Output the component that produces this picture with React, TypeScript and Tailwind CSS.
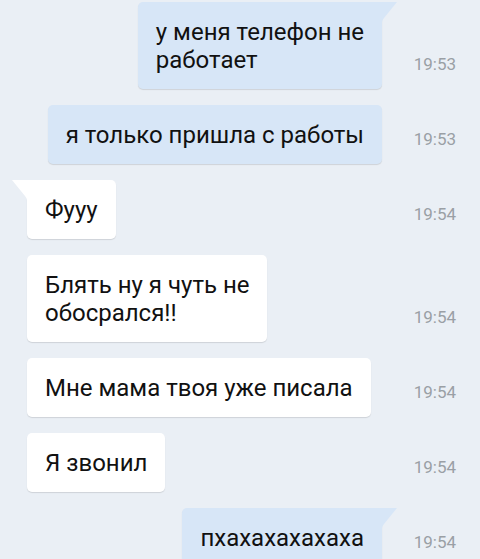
import React from 'react';

type Msg = { text: string[]; time: string; out: boolean; tail?: boolean };

const messages: Msg[] = [
  { text: ['у меня телефон не', 'работает'], time: '19:53', out: true, tail: true },
  { text: ['я только пришла с работы'], time: '19:53', out: true },
  { text: ['Фууу'], time: '19:54', out: false, tail: true },
  { text: ['Блять ну я чуть не', 'обосрался!!'], time: '19:54', out: false },
  { text: ['Мне мама твоя уже писала'], time: '19:54', out: false },
  { text: ['Я звонил'], time: '19:54', out: false },
  { text: ['пхахахахахаха'], time: '19:54', out: true, tail: true },
];

function Bubble({ msg }: { msg: Msg }) {
  const color = msg.out ? 'bg-[#d7e6f7]' : 'bg-white';
  return (
    <div
      className={`relative ${color} rounded-[5px] px-[18px] pt-4 pb-[15px] text-[24px] leading-[28px] text-[#111] shadow-[0_1px_1px_rgba(0,0,0,0.12)] ${
        msg.tail ? (msg.out ? 'rounded-tr-none' : 'rounded-tl-none') : ''
      }`}
    >
      {msg.tail && msg.out && (
        <svg className="absolute left-full top-0" width="15" height="20" viewBox="0 0 15 20">
          <path d="M0 0 H15 L2 16 Q0 18.5 0 20 Z" fill="#d7e6f7" />
        </svg>
      )}
      {msg.tail && !msg.out && (
        <svg className="absolute right-full top-0" width="15" height="20" viewBox="0 0 15 20">
          <path d="M15 0 H0 L13 16 Q15 18.5 15 20 Z" fill="#ffffff" />
        </svg>
      )}
      {msg.text.map((line) => (
        <div key={line} className="whitespace-nowrap">
          {line}
        </div>
      ))}
    </div>
  );
}

export default function App() {
  return (
    <div className="h-[559px] w-[480px] overflow-hidden bg-[#eaeff5] pt-[2px] font-['Roboto',sans-serif]">
      <div className="flex flex-col gap-4">
        {messages.map((msg, i) => (
          <div key={i} className="flex items-end">
            <div className={`flex flex-1 ${msg.out ? 'justify-end' : 'justify-start pl-[27px]'}`}>
              <Bubble msg={msg} />
            </div>
            <div className="w-[98px] shrink-0 pb-[15px] pr-6 text-right text-[17px] leading-5 text-[#9a9fa5]">
              {msg.time}
            </div>
          </div>
        ))}
      </div>
    </div>
  );
}
